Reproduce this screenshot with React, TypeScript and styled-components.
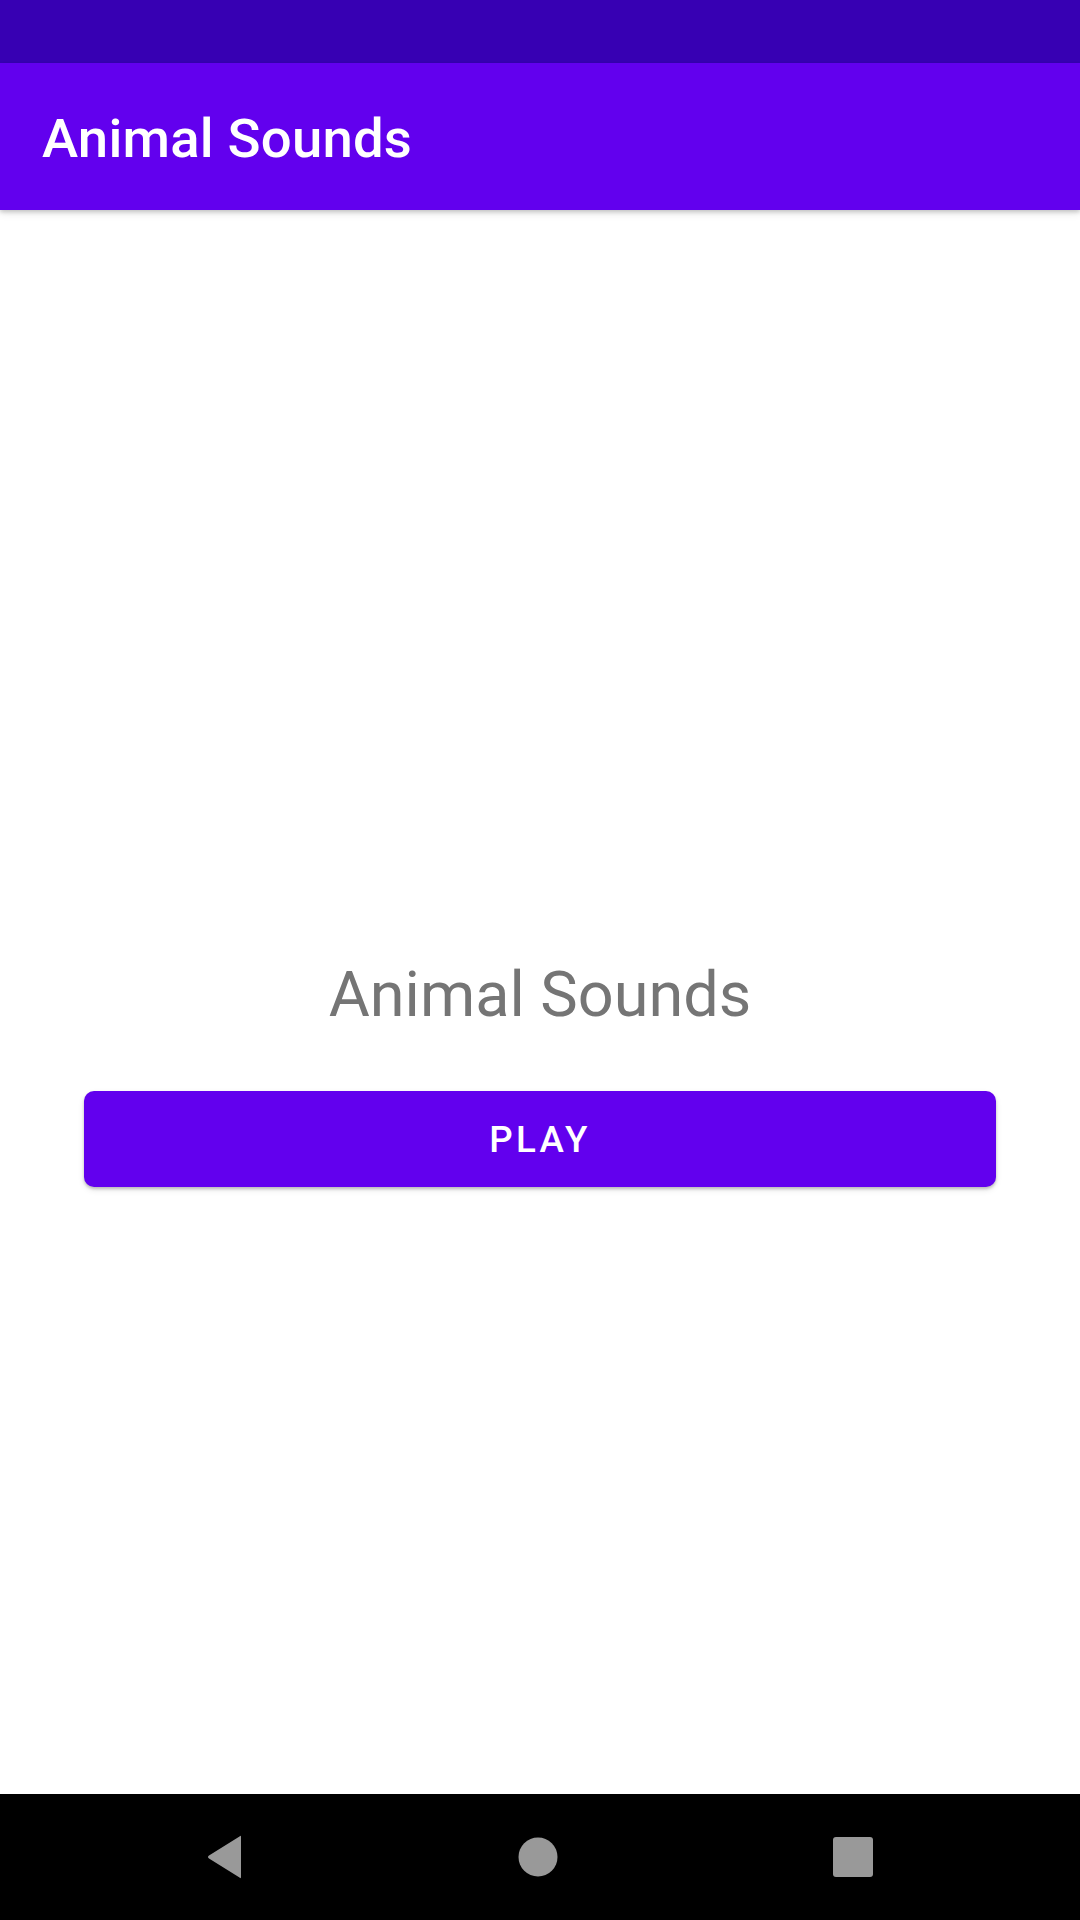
import React from "react";
import styled, { createGlobalStyle } from "styled-components";

const Global = createGlobalStyle`
  html, body { margin: 0; padding: 0; background: #ffffff; }
  body { font-family: Roboto, "Noto Sans", sans-serif; }
  * { box-sizing: border-box; }
`;

const Screen = styled.div`
  width: 1080px;
  height: 1920px;
  display: flex;
  flex-direction: column;
  background: #ffffff;
  overflow: hidden;
`;

const StatusBar = styled.div`
  height: 63px;
  flex: none;
  background: #3700b3;
`;

const AppBar = styled.header`
  height: 147px;
  flex: none;
  background: #6200ee;
  display: flex;
  align-items: flex-start;
  padding: 44px 0 0 42px;
  box-shadow: 0 2px 4px rgba(0, 0, 0, 0.18), 0 4px 8px rgba(0, 0, 0, 0.08);
  position: relative;
  z-index: 1;
`;

const AppTitle = styled.h1`
  margin: 0;
  font-family: Roboto, sans-serif;
  font-weight: 500;
  font-size: 54.5px;
  line-height: 62px;
  color: #ffffff;
  letter-spacing: 0.2px;
`;

const Content = styled.main`
  flex: 1;
  display: flex;
  flex-direction: column;
  align-items: center;
  padding-top: 748px;
`;

const Heading = styled.div`
  font-family: Roboto, sans-serif;
  font-weight: 400;
  font-size: 63px;
  line-height: 74px;
  color: #757575;
  text-align: center;
`;

const PlayButton = styled.button`
  margin-top: 59px;
  width: 912px;
  height: 96px;
  border: none;
  border-radius: 10px;
  background: #6200ee;
  color: #ffffff;
  font-family: Roboto, sans-serif;
  font-weight: 500;
  font-size: 36.75px;
  letter-spacing: 3.28px;
  text-transform: uppercase;
  display: flex;
  align-items: center;
  justify-content: center;
  padding: 0;
  box-shadow: 0 2px 3px rgba(0, 0, 0, 0.2), 0 3px 6px rgba(0, 0, 0, 0.1);
  cursor: pointer;
`;

const NavBar = styled.nav`
  height: 126px;
  flex: none;
  background: #000000;
  display: flex;
  align-items: center;
  justify-content: flex-start;
  padding-left: 207px;
  gap: 275px;
`;

const NavIcon = styled.svg`
  display: block;
  flex: none;
`;

export default function App() {
  return (
    <>
      <Global />
      <Screen>
        <StatusBar />
        <AppBar>
          <AppTitle>Animal Sounds</AppTitle>
        </AppBar>
        <Content>
          <Heading>Animal Sounds</Heading>
          <PlayButton>Play</PlayButton>
        </Content>
        <NavBar>
          <NavIcon width="36" height="44" viewBox="0 0 36 44">
            <path
              d="M34 2 L34 42 Q34 44 32.5 42.5 L2 23.5 Q0 22 2 20.5 L32.5 1.5 Q34 0 34 2 Z"
              fill="#999999"
            />
          </NavIcon>
          <NavIcon width="40" height="40" viewBox="0 0 40 40">
            <circle cx="20" cy="20" r="19.5" fill="#999999" />
          </NavIcon>
          <NavIcon width="40" height="40" viewBox="0 0 40 40">
            <rect x="0" y="0" width="40" height="40" rx="3" fill="#999999" />
          </NavIcon>
        </NavBar>
      </Screen>
    </>
  );
}
